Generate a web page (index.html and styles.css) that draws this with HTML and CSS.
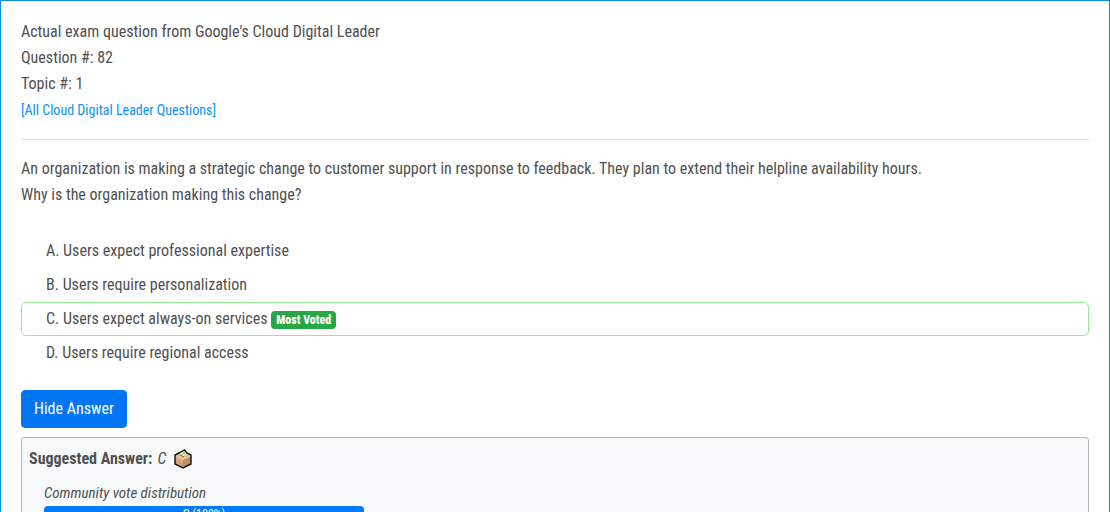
FILE: index.html
```html
<!DOCTYPE html>
<html lang="en">
<head>
<meta charset="utf-8">
<meta name="viewport" content="width=device-width, initial-scale=1">
<title>Cloud Digital Leader - Question 82</title>
<link rel="stylesheet" href="styles.css">
</head>
<body>
<main class="question-card">
  <header class="question-header">
    <div>Actual exam question from Google's Cloud Digital Leader</div>
    <div>Question #: 82</div>
    <div>Topic #: 1</div>
    <a class="all-questions" href="#">[All Cloud Digital Leader Questions]</a>
  </header>
  <p class="question-text">An organization is making a strategic change to customer support in response to feedback. They plan to extend their helpline availability hours.<br>Why is the organization making this change?</p>
  <ul class="choices">
    <li class="choice">A. Users expect professional expertise</li>
    <li class="choice">B. Users require personalization</li>
    <li class="choice most-voted">C. Users expect always-on services <span class="badge">Most Voted</span></li>
    <li class="choice">D. Users require regional access</li>
  </ul>
  <button class="toggle-answer" type="button">Hide Answer</button>
  <section class="answer">
    <div class="suggested">
      <strong>Suggested Answer:</strong>
      <em class="letter">C</em>
      <svg class="ballot" viewBox="0 0 20 20" role="img" aria-label="Voting">
        <path d="M2 6 10 2 18 6V15L10 19 2 15Z" fill="#d3a580"/>
        <path d="M10 10 18 6V15L10 19Z" fill="#c08e68"/>
        <path d="M2 6 10 3 18 6 10 10Z" fill="#e6c2a4"/>
        <path d="M2.500 7 10 10.500 17.500 7" fill="none" stroke="#f0d2b8"/>
        <path d="M7 4 11 1 14 4 10 7Z" fill="#eefde0"/>
        <path d="M10 3H12V5H10ZM9 5H10V6H9Z" fill="#7fdc3f"/>
        <path d="M7 6 11 8" stroke="#6b4a38" stroke-width="0.800"/>
        <path d="M7 3.500 2 6V15L10 19 18 15V6L14 4 11.500 1 7 3.500" fill="none" stroke="#111" stroke-width="1.400"/>
      </svg>
    </div>
    <div class="votes">
      <em class="votes-title">Community vote distribution</em>
      <div class="vote-bar">C (100%)</div>
    </div>
  </section>
</main>
</body>
</html>
```
FILE: styles.css
```css
* {
  box-sizing: border-box;
}

body {
  margin: 0;
  background: #fff;
  color: #505050;
  font-family: "Roboto Condensed", Roboto, sans-serif;
  font-size: 16px;
  line-height: 26px;
}

.question-card {
  padding: 18px 20px 20px;
  border: 1px solid #008fe2;
}

.question-header {
  padding-bottom: 15px;
  border-bottom: 1px solid #dedfe0;
}

.all-questions {
  display: block;
  color: #0b93ec;
  font-size: 14px;
  line-height: 27px;
  text-decoration: none;
}

.question-text {
  margin: 16px 0 26px;
}

.choices {
  margin: 0 0 20px;
  padding: 0;
  list-style: none;
}

.choice {
  padding: 3px 24px;
  border: 1px solid transparent;
  border-radius: 5px;
}

.most-voted {
  border-color: #90ee90;
}

.badge {
  display: inline-block;
  padding: 3px 5px;
  border-radius: 4px;
  background: #28a745;
  color: #fff;
  font-size: 12px;
  font-weight: 800;
  line-height: 12px;
  vertical-align: baseline;
}

.toggle-answer {
  display: block;
  padding: 6px 12px;
  border: 1px solid #0275f3;
  border-radius: 4px;
  background: #0275f3;
  color: #fff;
  font: inherit;
  line-height: 24px;
}

.answer {
  margin-top: 9px;
  padding: 8px 7px 15px;
  border: 1px solid #b5b5b5;
  border-radius: 3px;
  background: #f8f9fb;
}

.suggested {
  display: flex;
  align-items: center;
  gap: 5px;
}

.ballot {
  width: 20px;
  height: 20px;
  margin-left: 2px;
}

.votes {
  max-width: 335px;
  margin-top: 8px;
  padding-left: 15px;
}

.votes-title {
  display: block;
  font-size: 15px;
}

.vote-bar {
  height: 16px;
  border-radius: 4px;
  background: #007bff;
  color: #fff;
  font-size: 12px;
  line-height: 16px;
  text-align: center;
}
```
